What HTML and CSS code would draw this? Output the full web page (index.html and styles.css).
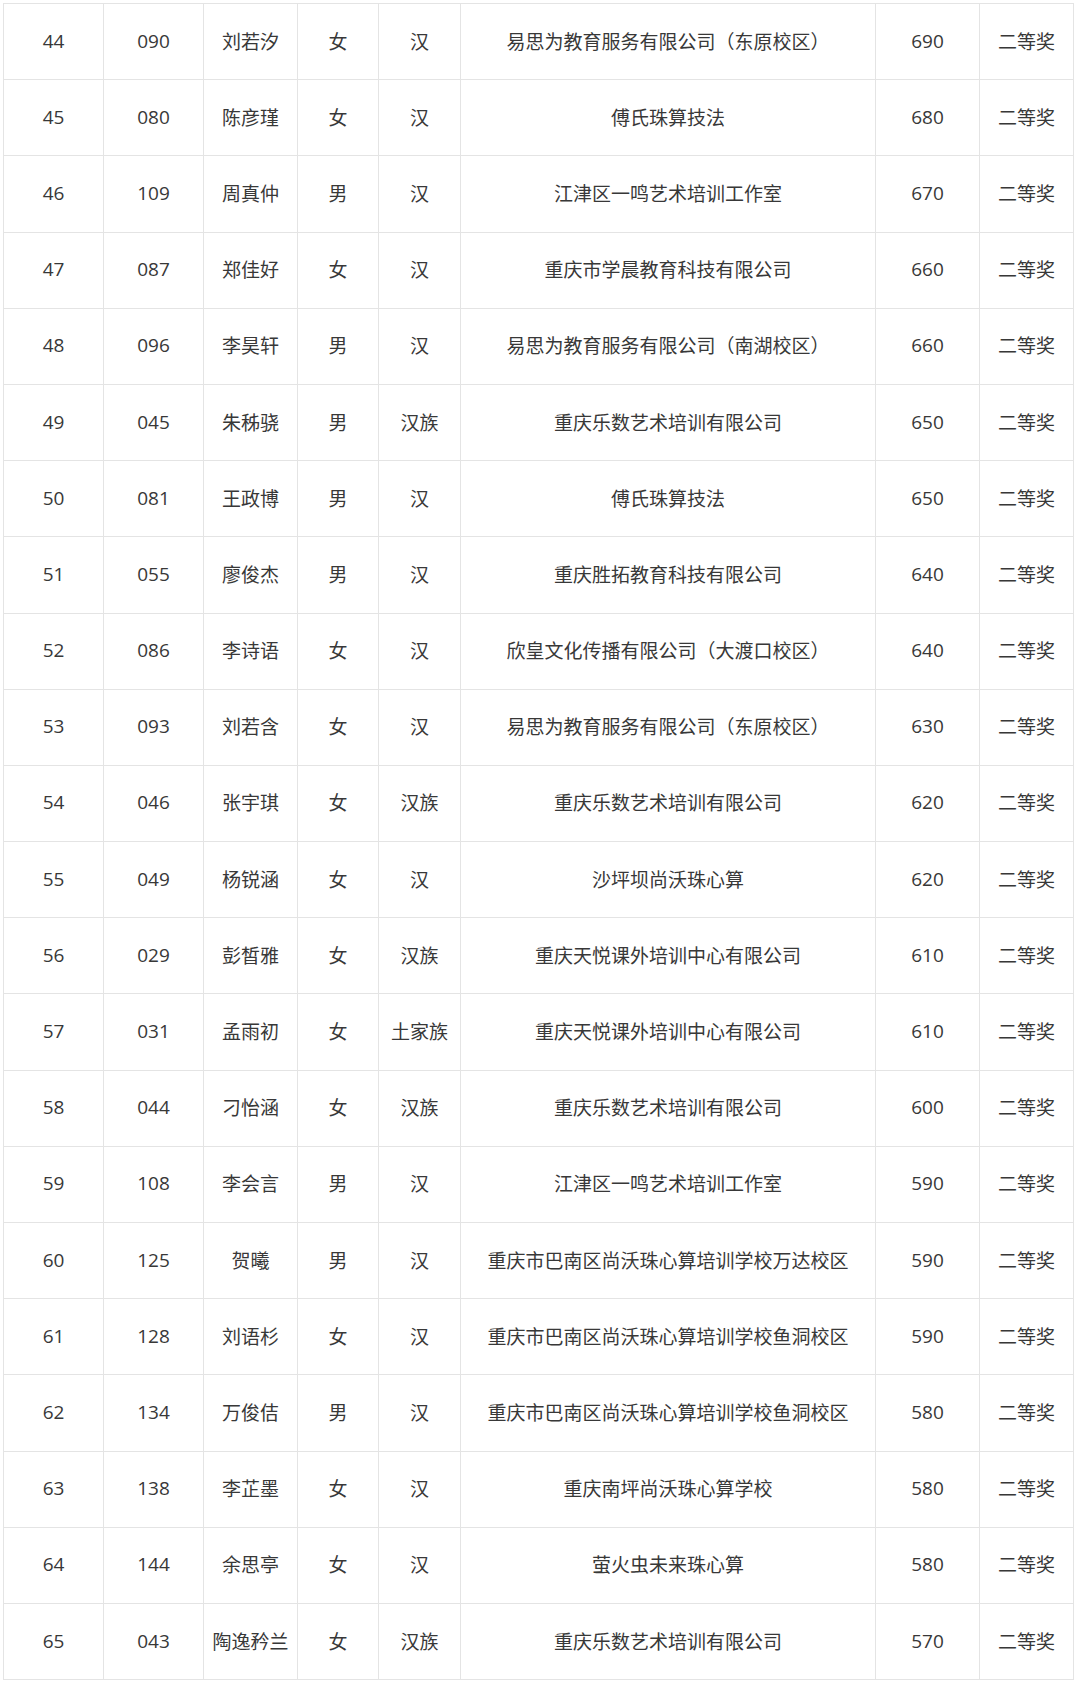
FILE: index.html
```html
<!DOCTYPE html>
<html lang="zh-CN">
<head>
<meta charset="utf-8">
<title>成绩表</title>
<link rel="stylesheet" href="styles.css">
</head>
<body>
<table class="results">
<colgroup>
<col class="c-rank"><col class="c-no"><col class="c-name"><col class="c-sex"><col class="c-eth"><col class="c-org"><col class="c-score"><col class="c-award">
</colgroup>
<tbody>
<tr><td>44</td><td>090</td><td>刘若汐</td><td>女</td><td>汉</td><td>易思为教育服务有限公司（东原校区）</td><td>690</td><td>二等奖</td></tr>
<tr><td>45</td><td>080</td><td>陈彦瑾</td><td>女</td><td>汉</td><td>傅氏珠算技法</td><td>680</td><td>二等奖</td></tr>
<tr><td>46</td><td>109</td><td>周真仲</td><td>男</td><td>汉</td><td>江津区一鸣艺术培训工作室</td><td>670</td><td>二等奖</td></tr>
<tr><td>47</td><td>087</td><td>郑佳好</td><td>女</td><td>汉</td><td>重庆市学晨教育科技有限公司</td><td>660</td><td>二等奖</td></tr>
<tr><td>48</td><td>096</td><td>李昊轩</td><td>男</td><td>汉</td><td>易思为教育服务有限公司（南湖校区）</td><td>660</td><td>二等奖</td></tr>
<tr><td>49</td><td>045</td><td>朱秭骁</td><td>男</td><td>汉族</td><td>重庆乐数艺术培训有限公司</td><td>650</td><td>二等奖</td></tr>
<tr><td>50</td><td>081</td><td>王政博</td><td>男</td><td>汉</td><td>傅氏珠算技法</td><td>650</td><td>二等奖</td></tr>
<tr><td>51</td><td>055</td><td>廖俊杰</td><td>男</td><td>汉</td><td>重庆胜拓教育科技有限公司</td><td>640</td><td>二等奖</td></tr>
<tr><td>52</td><td>086</td><td>李诗语</td><td>女</td><td>汉</td><td>欣皇文化传播有限公司（大渡口校区）</td><td>640</td><td>二等奖</td></tr>
<tr><td>53</td><td>093</td><td>刘若含</td><td>女</td><td>汉</td><td>易思为教育服务有限公司（东原校区）</td><td>630</td><td>二等奖</td></tr>
<tr><td>54</td><td>046</td><td>张宇琪</td><td>女</td><td>汉族</td><td>重庆乐数艺术培训有限公司</td><td>620</td><td>二等奖</td></tr>
<tr><td>55</td><td>049</td><td>杨锐涵</td><td>女</td><td>汉</td><td>沙坪坝尚沃珠心算</td><td>620</td><td>二等奖</td></tr>
<tr><td>56</td><td>029</td><td>彭皙雅</td><td>女</td><td>汉族</td><td>重庆天悦课外培训中心有限公司</td><td>610</td><td>二等奖</td></tr>
<tr><td>57</td><td>031</td><td>孟雨初</td><td>女</td><td>土家族</td><td>重庆天悦课外培训中心有限公司</td><td>610</td><td>二等奖</td></tr>
<tr><td>58</td><td>044</td><td>刁怡涵</td><td>女</td><td>汉族</td><td>重庆乐数艺术培训有限公司</td><td>600</td><td>二等奖</td></tr>
<tr><td>59</td><td>108</td><td>李会言</td><td>男</td><td>汉</td><td>江津区一鸣艺术培训工作室</td><td>590</td><td>二等奖</td></tr>
<tr><td>60</td><td>125</td><td>贺曦</td><td>男</td><td>汉</td><td>重庆市巴南区尚沃珠心算培训学校万达校区</td><td>590</td><td>二等奖</td></tr>
<tr><td>61</td><td>128</td><td>刘语杉</td><td>女</td><td>汉</td><td>重庆市巴南区尚沃珠心算培训学校鱼洞校区</td><td>590</td><td>二等奖</td></tr>
<tr><td>62</td><td>134</td><td>万俊佶</td><td>男</td><td>汉</td><td>重庆市巴南区尚沃珠心算培训学校鱼洞校区</td><td>580</td><td>二等奖</td></tr>
<tr><td>63</td><td>138</td><td>李芷墨</td><td>女</td><td>汉</td><td>重庆南坪尚沃珠心算学校</td><td>580</td><td>二等奖</td></tr>
<tr><td>64</td><td>144</td><td>余思亭</td><td>女</td><td>汉</td><td>萤火虫未来珠心算</td><td>580</td><td>二等奖</td></tr>
<tr><td>65</td><td>043</td><td>陶逸矜兰</td><td>女</td><td>汉族</td><td>重庆乐数艺术培训有限公司</td><td>570</td><td>二等奖</td></tr>
</tbody>
</table>
</body>
</html>
```

FILE: styles.css
```css
html, body {
  margin: 0;
  padding: 0;
  background: #ffffff;
}

body {
  padding: 3px 0 0 3px;
  font-family: "Open Sans", "Noto Sans CJK SC", sans-serif;
  color: #383838;
}

.results {
  border-collapse: collapse;
  table-layout: fixed;
  width: 1071px;
  font-size: 19px;
}

.results td {
  border: 1.5px solid #e4e4e4;
  height: 76.2px;
  padding: 0 0 2px 0;
  text-align: center;
  vertical-align: middle;
  box-sizing: border-box;
  white-space: nowrap;
}

.c-rank { width: 100px; }
.c-no { width: 100px; }
.c-name { width: 94px; }
.c-sex { width: 81px; }
.c-eth { width: 82px; }
.c-org { width: 415px; }
.c-score { width: 104px; }
.c-award { width: 94px; }
```
